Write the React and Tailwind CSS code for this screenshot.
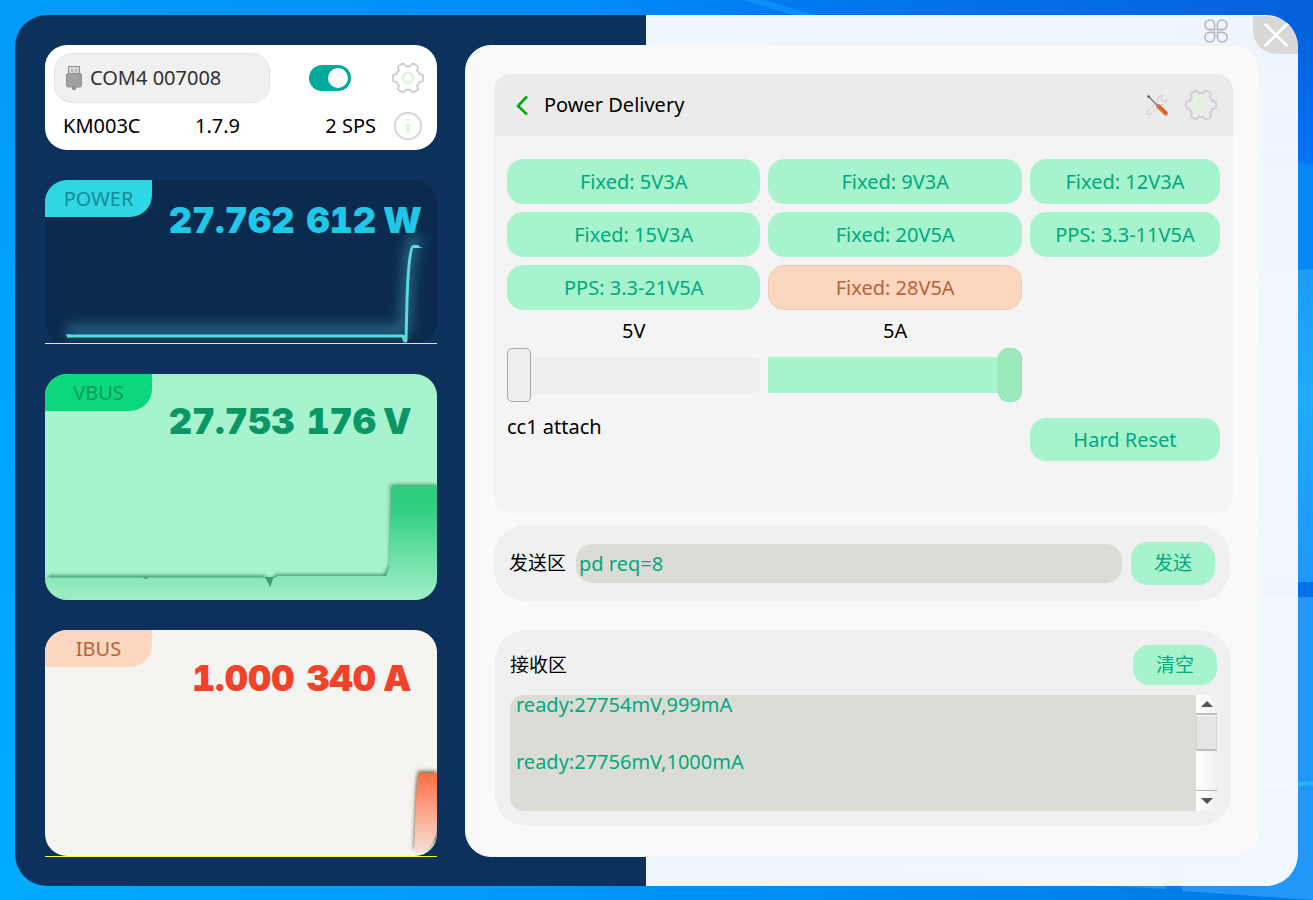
import { useState } from "react";

const gearPath = (() => {
  const pts = [];
  for (let i = 0; i < 6; i++) {
    const base = i * 60;
    for (const [offset, radius] of [[-19, 11.4], [-15, 14.6], [-9, 15.4], [9, 15.4], [15, 14.6], [19, 11.4], [30, 12.4]]) {
      const a = ((base + offset) * Math.PI) / 180;
      pts.push([16 + radius * Math.cos(a), 16 + radius * Math.sin(a)]);
    }
  }
  const mid = (p, q) => [(p[0] + q[0]) / 2, (p[1] + q[1]) / 2];
  const f = (p) => p.map((n) => n.toFixed(2)).join(" ");
  let d = "M" + f(mid(pts[pts.length - 1], pts[0]));
  pts.forEach((p, i) => {
    d += "Q" + f(p) + " " + f(mid(p, pts[(i + 1) % pts.length]));
  });
  return d + "Z";
})();

function GearIcon() {
  return (
    <svg viewBox="0 0 32 32" className="size-8" fill="none" strokeWidth="2">
      <path d={gearPath} stroke="#d0d0d0" />
      <circle cx="16" cy="16" r="5" stroke="#d2f7d2" strokeWidth="2.4" />
    </svg>
  );
}

function InfoIcon() {
  return (
    <svg viewBox="0 0 32 32" className="size-8" fill="none">
      <circle cx="16" cy="16" r="13.2" stroke="#d3d3d3" strokeWidth="1.8" />
      <path d="M16 13.5v9.5M16 8.5v2.6" stroke="#d2f7d2" strokeWidth="2.6" />
    </svg>
  );
}

function UsbIcon() {
  return (
    <svg viewBox="0 0 16 24" className="h-6 w-4">
      <rect x="2.5" y=".5" width="11" height="8" fill="#d8d8d8" stroke="#8f8f8f" />
      <path d="M5 3.5h2v2H5zM9 3.5h2v2H9z" fill="#aaa" />
      <rect x=".5" y="7.5" width="15" height="13.5" rx="1.5" fill="#a0a0a0" stroke="#8f8f8f" />
      <path d="M6 21h4v2.8H6z" fill="#8f8f8f" />
    </svg>
  );
}

function ToolsIcon() {
  return (
    <svg viewBox="0 0 24 24" className="size-6" fill="none" strokeLinecap="round">
      <path
        d="M2.2 18.6 12.8 8.6C12 4.8 15 1.6 18.8 2.4L16.2 5l.6 2.6 2.6.6 2.4-2.4c.8 3.8-2.4 6.6-6 5.8L5.2 21.4c-2 1.4-4.4-.8-3-2.8Z"
        stroke="#cbcbcb"
      />
      <circle cx="3.6" cy="3.6" r="1.4" fill="#555" />
      <path d="M4 4l9 9" stroke="#777" strokeWidth="1.3" />
      <path d="m13.6 13.4 7 6.8" stroke="#e2703a" strokeWidth="4.6" />
      <path d="m14.6 13.6 6.4 6.2" stroke="#b9501f" strokeWidth="1" />
    </svg>
  );
}

function LeavesIcon() {
  return (
    <svg viewBox="0 0 24 24" className="size-6" fill="none" stroke="#b5b5b5" strokeWidth="1.6">
      <path d="M10.6 10.6H5.6A4.6 4.8 0 0 1 1 5.8 4.8 4.8 0 0 1 10.6 5.8Z" />
      <path d="M13.4 10.6h5A4.6 4.8 0 0 0 23 5.8a4.8 4.8 0 0 0-9.6 0Z" />
      <path d="M10.6 13.4H5.6A4.6 4.8 0 0 0 1 18.2a4.8 4.8 0 0 0 9.6 0Z" />
      <path d="M13.4 13.4h5A4.6 4.8 0 0 1 23 18.2a4.8 4.8 0 0 1-9.6 0Z" />
    </svg>
  );
}

function Wallpaper() {
  return (
    <svg viewBox="0 0 1313 900" preserveAspectRatio="none" className="absolute inset-0 size-full" aria-hidden="true">
      <defs>
        <linearGradient id="sky" x1="0" x2="1" y1="0" y2="0">
          <stop offset="0" stopColor="#009df7" />
          <stop offset=".45" stopColor="#008cf8" />
          <stop offset=".6" stopColor="#007aee" />
          <stop offset="1" stopColor="#0461dc" />
        </linearGradient>
        <linearGradient id="floor" x1="0" x2="1" y1="0" y2="0">
          <stop offset="0" stopColor="#00acff" />
          <stop offset=".4" stopColor="#0098fb" />
          <stop offset=".85" stopColor="#0080ea" />
          <stop offset="1" stopColor="#0078e4" />
        </linearGradient>
        <linearGradient id="fade" x1="0" x2="0" y1="0" y2="1">
          <stop offset=".05" stopColor="#fff" stopOpacity="0" />
          <stop offset=".9" stopColor="#fff" />
        </linearGradient>
        <mask id="floor-mask">
          <rect width="1313" height="900" fill="url(#fade)" />
        </mask>
        <linearGradient id="edge" x1="0" x2="0" y1="0" y2="1">
          <stop offset="0" stopColor="#0461dc" />
          <stop offset="1" stopColor="#0074fa" />
        </linearGradient>
        <linearGradient id="pane" x1="0" x2="0" y1="0" y2="1">
          <stop offset="0" stopColor="#1c9cf6" />
          <stop offset=".4" stopColor="#1fabff" />
          <stop offset="1" stopColor="#1f98fb" />
        </linearGradient>
      </defs>
      <rect width="1313" height="900" fill="url(#sky)" />
      <rect width="1313" height="900" fill="url(#floor)" mask="url(#floor-mask)" />
      <path d="M742 0h22l54 16h-22Z" fill="#18a0ff" opacity=".5" />
      <rect x="1180" y="30" width="133" height="140" fill="url(#edge)" />
      <path d="M1180 156l133 8v120h-133Z" fill="#0088fb" />
      <path d="M1180 278l133-9v313h-133Z" fill="url(#pane)" />
      <rect x="1180" y="582" width="133" height="15" fill="#006fe8" />
      <path d="M1182 597h131v303l-131-9Z" fill="#2198f8" />
      <path d="M1182 790l131-9v4l-131 9Z" fill="#1fb4ff" />
      <path d="M900 875l266 14V597H900Z" fill="#2198f8" />
    </svg>
  );
}

function Meter({ label, whole, fraction, unit, tone, children }) {
  return (
    <section className={"relative isolate " + tone.card}>
      {children}
      <h2 className={"flex h-[37px] w-[107px] items-center justify-center rounded-tl-[22px] rounded-br-[22px] text-xl " + tone.badge}>
        {label}
      </h2>
      <p className={"flex justify-end font-['Inter'] text-4xl leading-9 font-black tabular-nums " + tone.value}>
        <span>{whole}</span>
        <span className="ml-3">{fraction}</span>
        <span className="w-[61px] pl-[7px]">{unit}</span>
      </p>
    </section>
  );
}

const profiles = [
  "Fixed: 5V3A",
  "Fixed: 9V3A",
  "Fixed: 12V3A",
  "Fixed: 15V3A",
  "Fixed: 20V5A",
  "PPS: 3.3-11V5A",
  "PPS: 3.3-21V5A",
  "Fixed: 28V5A",
];

const sliderBase =
  "block h-[54px] w-full appearance-none bg-transparent [&::-webkit-slider-runnable-track]:h-9 [&::-webkit-slider-thumb]:-mt-[9px] [&::-webkit-slider-thumb]:h-[54px] [&::-webkit-slider-thumb]:w-6 [&::-webkit-slider-thumb]:appearance-none [&::-webkit-slider-thumb]:border ";

export default function App() {
  const [active, setActive] = useState("Fixed: 28V5A");
  const [command, setCommand] = useState("pd req=8");
  const [log, setLog] = useState("ready:27754mV,999mA\n\n\nready:27756mV,1000mA");
  const [on, setOn] = useState(true);
  const [volts, setVolts] = useState(0);
  const [amps, setAmps] = useState(100);

  return (
    <div className="relative isolate flex min-h-screen bg-[#0090f8] px-[15px] pt-[15px] pb-[14px] font-['Noto_Sans','Noto_Sans_CJK_SC',sans-serif] text-xl text-black">
      <Wallpaper />
      <main className="relative flex flex-1 gap-7 rounded-[32px] bg-[linear-gradient(to_right,#0c315c_49.2%,rgba(255,255,255,0.935)_49.2%)] pt-[30px] pr-[38px] pb-[29px] pl-[30px]">
        <div className="absolute top-0 right-0 flex items-start gap-[25px]">
          <button type="button" aria-label="Layout" className="pt-1">
            <LeavesIcon />
          </button>
          <button
            type="button"
            aria-label="Close"
            className="mt-px flex h-[38px] w-[45px] items-center justify-center rounded-tr-[32px] rounded-bl-[24px] bg-[#d8d8d8]"
          >
            <svg viewBox="0 0 24 24" className="size-6" stroke="#fff" strokeWidth="2.6" strokeLinecap="round">
              <path d="M1.5 1.5l21 21M22.5 1.5l-21 21" />
            </svg>
          </button>
        </div>

        <div className="flex w-[392px] shrink-0 flex-col gap-[30px]">
          <section className="flex flex-col rounded-[22px] bg-white pt-2 pr-[13px] pb-2 pl-[9px]">
            <div className="flex items-center">
              <div className="relative">
                <span className="pointer-events-none absolute top-[13px] left-3">
                  <UsbIcon />
                </span>
                <select
                  aria-label="Port"
                  className="h-[50px] w-[216px] appearance-none rounded-[18px] border border-[#e3e3e3] bg-[#f0f0f0] pl-[35px] text-[#303030]"
                >
                  <option>COM4 007008</option>
                </select>
              </div>
              <label className="ml-[39px] flex h-[26px] w-[42px] cursor-pointer items-center justify-end rounded-full bg-[#00ab9b] px-[3px] has-[:not(:checked)]:justify-start">
                <input
                  type="checkbox"
                  aria-label="Connected"
                  checked={on}
                  onChange={(e) => setOn(e.target.checked)}
                  className="size-5 appearance-none rounded-full bg-white"
                />
              </label>
              <button type="button" aria-label="Settings" className="ml-auto">
                <GearIcon />
              </button>
            </div>
            <div className="mt-[7px] flex h-8 items-center pl-[9px]">
              <span className="w-[132px]">KM003C</span>
              <span>1.7.9</span>
              <span className="mr-4 ml-auto">2 SPS</span>
              <button type="button" aria-label="Device info">
                <InfoIcon />
              </button>
            </div>
          </section>

          <Meter
            label="POWER"
            whole="27.762"
            fraction="612"
            unit="W"
            tone={{
              card: "h-[164px] rounded-t-[22px] border-b border-[#ffff00]",
              badge: "bg-[#2fd7e3] text-[#188a92]",
              value: "mt-[-15px] text-[#1fc8e6]",
            }}
          >
            <svg viewBox="0 0 392 164" preserveAspectRatio="none" className="absolute inset-0 -z-10 size-full rounded-[22px] bg-[#0a2b4e]">
              <defs>
                <filter id="glow" x="-20%" y="-20%" width="140%" height="140%">
                  <feGaussianBlur stdDeviation="6" />
                </filter>
              </defs>
              <path
                d="M22 152H354L360 148 364 84 368 62H376"
                fill="none"
                stroke="#3f9bb0"
                strokeOpacity=".5"
                strokeWidth="12"
                filter="url(#glow)"
              />
              <path
                d="M22 157H358L359.5 162 361 162 362 121C363 91 365 67 368 67H374"
                fill="none"
                stroke="#5bd8e3"
                strokeWidth="3"
                strokeLinejoin="round"
              />
              <path d="M20 155.500H26V158.500H24ZM370 65.500L378 68.500H370Z" fill="#5bd8e3" />
            </svg>
          </Meter>

          <Meter
            label="VBUS"
            whole="27.753"
            fraction="176"
            unit="V"
            tone={{
              card: "h-[226px]",
              badge: "bg-[#0bd87a] text-[#0b9a60]",
              value: "mt-[-8px] text-[#0b9666]",
            }}
          >
            <svg viewBox="0 0 392 226" preserveAspectRatio="none" className="absolute inset-0 -z-10 size-full rounded-[22px] bg-[#a7f3cd]">
              <defs>
                <linearGradient id="vbus" gradientUnits="userSpaceOnUse" x1="0" x2="0" y1="112" y2="226">
                  <stop offset="0" stopColor="#30cf80" />
                  <stop offset=".2" stopColor="#30cf80" />
                  <stop offset=".8" stopColor="#86e8b8" />
                  <stop offset="1" stopColor="#9eefc6" />
                </linearGradient>
                <filter id="vbus-shadow" x="-10%" y="-10%" width="120%" height="120%">
                  <feGaussianBlur stdDeviation="2" />
                </filter>
              </defs>
              <path d="M3 202H220L225 212 230 201H340L345 190 346 111H392V226H3Z" fill="#2b8058" filter="url(#vbus-shadow)" />
              <path d="M219 203L225.300 213 230 203Z" fill="#3f9f70" />
              <path d="M0 203.500H98L101 205 104 203.500H220L225.300 213 228 204.500 233 202H341L344 193 347 114 350 112H392V226H0Z" fill="url(#vbus)" />
            </svg>
          </Meter>

          <Meter
            label="IBUS"
            whole="1.000"
            fraction="340"
            unit="A"
            tone={{
              card: "h-[227px] rounded-t-[22px] border-b border-[#ffff00]",
              badge: "bg-[#fbd7c0] text-[#b9613a]",
              value: "mt-[-7px] text-[#f3422a]",
            }}
          >
            <svg viewBox="0 0 392 227" preserveAspectRatio="none" className="absolute inset-0 -z-10 size-full rounded-[22px] bg-[#f5f4f1]">
              <defs>
                <linearGradient id="ibus" x1="0" x2="0" y1="0" y2="1">
                  <stop offset="0" stopColor="#ff6f43" />
                  <stop offset="1" stopColor="#f6e0d8" />
                </linearGradient>
                <filter id="ibus-shadow" x="-50%" y="-20%" width="200%" height="140%">
                  <feGaussianBlur stdDeviation="2" />
                </filter>
              </defs>
              <path d="M369 220L371 160 373 142H392V210L382 220Z" fill="#6b5b30" filter="url(#ibus-shadow)" />
              <path d="M369 222L371 170 372 158 374 144H392V200Q390 216 379 223L370 224Z" fill="url(#ibus)" />
            </svg>
          </Meter>
        </div>

        <div className="flex min-w-0 flex-1 flex-col rounded-[26px] border border-[#f5f5f4] bg-[#f9f9f7] pt-7 pr-[26px] pb-7 pl-7">
          <section className="flex h-[439px] flex-col overflow-hidden rounded-2xl bg-[#f4f4f4]">
            <header className="flex h-[62px] items-center bg-[#ebebeb] pr-4 pl-5">
              <button type="button" aria-label="Back" className="mr-3">
                <svg viewBox="0 0 18 20" className="h-5 w-[18px]" fill="none" stroke="#00aa0c" strokeWidth="2.600">
                  <path d="M13 1.500L4 11 13 19.500" />
                </svg>
              </button>
              <h1>Power Delivery</h1>
              <button type="button" aria-label="Tools" className="mr-4 ml-auto">
                <ToolsIcon />
              </button>
              <button type="button" aria-label="Power delivery settings">
                <GearIcon />
              </button>
            </header>
            <div className="px-[13px] pt-[23px]">
              <div className="grid grid-cols-[4fr_4fr_3fr] gap-2">
                {profiles.map((name) => (
                  <button
                    key={name}
                    type="button"
                    onClick={() => setActive(name)}
                    className={
                      "h-[45px] rounded-2xl border " +
                      (name === active
                        ? "border-[#f3cab0] bg-[#fbd7c0] text-[#b9613a]"
                        : "border-[#a7f3cd] bg-[#a7f3cd] text-[#00a97f]")
                    }
                  >
                    {name}
                  </button>
                ))}
              </div>
              <div className="grid grid-cols-[4fr_4fr_3fr] gap-x-2">
                <div>
                  <label htmlFor="volts" className="flex h-[38px] items-center justify-center pt-1">
                    5V
                  </label>
                  <input
                    id="volts"
                    type="range"
                    value={volts}
                    onChange={(e) => setVolts(Number(e.target.value))}
                    className={
                      sliderBase +
                      "[&::-webkit-slider-runnable-track]:rounded [&::-webkit-slider-runnable-track]:bg-[#eeeeee] [&::-webkit-slider-thumb]:rounded-[5px] [&::-webkit-slider-thumb]:border-[#a9a9a9] [&::-webkit-slider-thumb]:bg-[#eeeeee]"
                    }
                  />
                </div>
                <div>
                  <label htmlFor="amps" className="flex h-[38px] items-center justify-center pt-1">
                    5A
                  </label>
                  <input
                    id="amps"
                    type="range"
                    value={amps}
                    onChange={(e) => setAmps(Number(e.target.value))}
                    className={
                      sliderBase +
                      "[&::-webkit-slider-runnable-track]:rounded-r-xl [&::-webkit-slider-runnable-track]:bg-[#a7f3cd] [&::-webkit-slider-thumb]:rounded-[10px] [&::-webkit-slider-thumb]:border-[#8fe0b3] [&::-webkit-slider-thumb]:bg-[#9de9be]"
                    }
                  />
                </div>
              </div>
              <div className="mt-4 grid grid-cols-[4fr_4fr_3fr] gap-x-2">
                <p className="col-span-2 leading-[18px]">cc1 attach</p>
                <button type="button" className="h-[43px] rounded-2xl bg-[#a7f3cd] text-[#00a97f]">
                  Hard Reset
                </button>
              </div>
            </div>
          </section>

          <form
            onSubmit={(e) => e.preventDefault()}
            className="mt-3 mr-[3px] flex h-[76px] items-center rounded-[32px] bg-[#f0f0f0] px-[15px]"
          >
            <label htmlFor="command" className="mr-[10px] text-[19px]">
              发送区
            </label>
            <input
              id="command"
              value={command}
              onChange={(e) => setCommand(e.target.value)}
              className="h-[39px] min-w-0 flex-1 rounded-2xl bg-[#dbdcd5] px-[3px] text-[#00a97f]"
            />
            <button type="submit" className="ml-[9px] h-[43px] w-[84px] rounded-2xl bg-[#a7f3cd] text-[19px] text-[#00a97f]">
              发送
            </button>
          </form>

          <section className="mt-[29px] mr-[2px] ml-px rounded-[32px] bg-[#f0f0f0] pt-[15px] pr-[14px] pb-[15px] pl-[15px]">
            <div className="flex items-center justify-between text-[19px]">
              <label htmlFor="log">接收区</label>
              <button type="button" onClick={() => setLog("")} className="h-10 w-[84px] rounded-2xl bg-[#a7f3cd] text-[#00a97f]">
                清空
              </button>
            </div>
            <div className="mt-[10px] flex h-[116px]">
              <textarea
                id="log"
                readOnly
                value={log}
                className="min-w-0 flex-1 resize-none overflow-hidden rounded-l-[14px] bg-[#dbdcd5] px-[6px] leading-[19px] text-[#00a97f]"
              />
              <div className="flex w-[21px] flex-col bg-gradient-to-r from-white to-[#f0f0f0]">
                <button type="button" aria-label="Scroll up" className="flex h-5 items-center justify-center border-b-2 border-[#bdbdbd]">
                  <svg viewBox="0 0 12 6" className="h-[6px] w-3" fill="#555">
                    <path d="M6 0l6 6H0Z" />
                  </svg>
                </button>
                <div className="mt-px h-[35px] border-x border-b-2 border-x-[#d6d6d6] border-b-[#bdbdbd] bg-[#e5e5e5]" />
                <button type="button" aria-label="Scroll down" className="mt-auto flex h-[21px] items-center justify-center border-t border-[#b5b5b5]">
                  <svg viewBox="0 0 12 6" className="h-[6px] w-3" fill="#555">
                    <path d="M6 6l6-6H0Z" />
                  </svg>
                </button>
              </div>
            </div>
          </section>
        </div>
      </main>
    </div>
  );
}
